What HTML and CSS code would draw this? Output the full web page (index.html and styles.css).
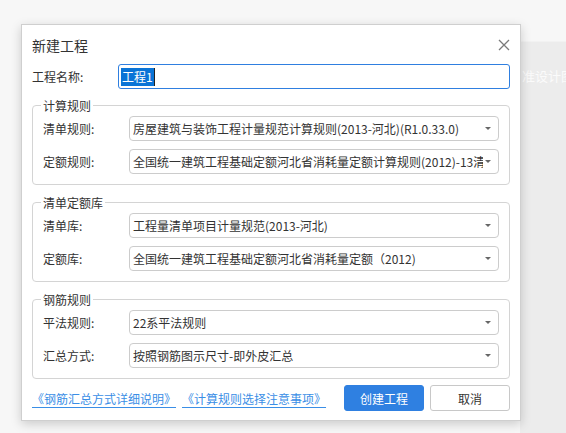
FILE: index.html
```html
<!DOCTYPE html>
<html lang="zh-CN">
<head>
<meta charset="utf-8">
<title>新建工程</title>
<link rel="stylesheet" href="styles.css">
</head>
<body>
<div class="desktop">
  <div class="backdrop-panel">
    <div class="backdrop-text">准设计图</div>
  </div>
  <div class="dialog">
    <div class="header">
      <div class="title">新建工程</div>
      <svg class="close" width="12" height="12" viewBox="0 0 12 12"><path d="M1 1L11 11M11 1L1 11" stroke="#7a7a7a" stroke-width="1.3" fill="none"/></svg>
    </div>
    <div class="name-row">
      <div class="name-label">工程名称:</div>
      <div class="name-input"><span class="sel">工程1</span><span class="caret"></span></div>
    </div>

    <fieldset class="group">
      <legend>计算规则</legend>
      <div class="row">
        <div class="label">清单规则:</div>
        <div class="select"><span class="val">房屋建筑与装饰工程计量规范计算规则(2013-河北)(R1.0.33.0)</span><span class="arrow"></span></div>
      </div>
      <div class="row">
        <div class="label">定额规则:</div>
        <div class="select"><span class="val">全国统一建筑工程基础定额河北省消耗量定额计算规则(2012)-13清单</span><span class="arrow"></span></div>
      </div>
    </fieldset>

    <fieldset class="group">
      <legend>清单定额库</legend>
      <div class="row">
        <div class="label">清单库:</div>
        <div class="select"><span class="val">工程量清单项目计量规范(2013-河北)</span><span class="arrow"></span></div>
      </div>
      <div class="row">
        <div class="label">定额库:</div>
        <div class="select"><span class="val">全国统一建筑工程基础定额河北省消耗量定额（2012)</span><span class="arrow"></span></div>
      </div>
    </fieldset>

    <fieldset class="group">
      <legend>钢筋规则</legend>
      <div class="row">
        <div class="label">平法规则:</div>
        <div class="select"><span class="val">22系平法规则</span><span class="arrow"></span></div>
      </div>
      <div class="row">
        <div class="label">汇总方式:</div>
        <div class="select"><span class="val">按照钢筋图示尺寸-即外皮汇总</span><span class="arrow"></span></div>
      </div>
    </fieldset>

    <div class="footer">
      <div class="links">
        <a class="link" href="#">《钢筋汇总方式详细说明》</a>
        <a class="link" href="#">《计算规则选择注意事项》</a>
      </div>
      <div class="buttons">
        <div class="btn primary">创建工程</div>
        <div class="btn">取消</div>
      </div>
    </div>
  </div>
</div>
</body>
</html>
```

FILE: styles.css
```css
* { box-sizing: border-box; }
html, body {
  margin: 0;
  padding: 0;
  width: 566px;
  height: 433px;
  overflow: hidden;
  background: #f7f7f7;
  font-family: "Noto Sans CJK SC", "Noto Sans", sans-serif;
  color: #333;
}
.desktop {
  position: relative;
  width: 566px;
  height: 433px;
}
.backdrop-panel {
  position: absolute;
  left: 520px;
  top: 41px;
  width: 46px;
  height: 392px;
  background: #ececec;
  border-top: 1px solid #f2f2f2;
}
.backdrop-text {
  margin-top: 26px;
  padding-left: 2px;
  font-size: 13px;
  line-height: 16px;
  color: #fbfbfb;
  white-space: nowrap;
}
.dialog {
  position: absolute;
  left: 21px;
  top: 24px;
  width: 500px;
  height: 397px;
  background: #fff;
  border: 1px solid #cfcfcf;
  box-shadow: 0 3px 10px rgba(0, 0, 0, 0.18);
  padding: 0 10px 0 10px;
  display: flex;
  flex-direction: column;
}
.header {
  height: 39px;
  display: flex;
  align-items: center;
  justify-content: space-between;
  padding-top: 0;
}
.title {
  font-size: 14px;
  line-height: 20px;
  color: #333;
  margin-top: 1px;
}
.close {
  margin-right: 0;
  margin-top: 0;
}
.name-row {
  display: flex;
  align-items: center;
  height: 25px;
}
.name-label {
  width: 86px;
  font-size: 12px;
}
.name-input {
  flex: 1;
  height: 25px;
  border: 1px solid #2f7fe0;
  border-radius: 3px;
  display: flex;
  align-items: center;
  padding-left: 2px;
  font-size: 12px;
}
.sel {
  background: #0a74d6;
  color: #fff;
  line-height: 18px;
  padding: 0 1px;
}
.caret {
  width: 1px;
  height: 18px;
  background: #222;
}
.group {
  margin: 8px 0 0 0;
  padding: 2px 10px 10px 10px;
  border: 1px solid #d4d4d4;
  border-radius: 4px;
  min-width: 0;
}
.group + .group {
  margin-top: 9px;
}
.group legend {
  font-size: 12px;
  line-height: 17px;
  padding: 0 2px;
  margin-left: -2px;
  color: #333;
}
.row {
  display: flex;
  align-items: center;
  height: 25px;
}
.row + .row {
  margin-top: 8px;
}
.label {
  width: 86px;
  flex: none;
  font-size: 12px;
}
.select {
  flex: 1;
  min-width: 0;
  height: 25px;
  border: 1px solid #cccccc;
  border-radius: 4px;
  display: flex;
  align-items: center;
  padding-left: 3px;
  padding-right: 7px;
  font-size: 12px;
}
.val {
  flex: 1;
  min-width: 0;
  white-space: nowrap;
  overflow: hidden;
  color: #333;
}
.arrow {
  flex: none;
  width: 0;
  height: 0;
  margin-left: 2px;
  border-left: 3px solid transparent;
  border-right: 3px solid transparent;
  border-top: 3px solid #666;
}
.footer {
  margin-top: 6px;
  display: flex;
  align-items: center;
  justify-content: space-between;
  height: 26px;
}
.links {
  display: flex;
  gap: 6px;
}
.link {
  font-size: 12px;
  color: #3a8ee6;
  text-decoration: underline;
  text-underline-offset: 3px;
}
.buttons {
  display: flex;
  gap: 6px;
}
.btn {
  width: 80px;
  height: 26px;
  border-radius: 3px;
  border: 1px solid #c8c8c8;
  background: #fff;
  font-size: 12px;
  display: flex;
  align-items: center;
  justify-content: center;
  color: #333;
}
.btn.primary {
  background: #2f80e1;
  border-color: #2f80e1;
  color: #fff;
}
```
